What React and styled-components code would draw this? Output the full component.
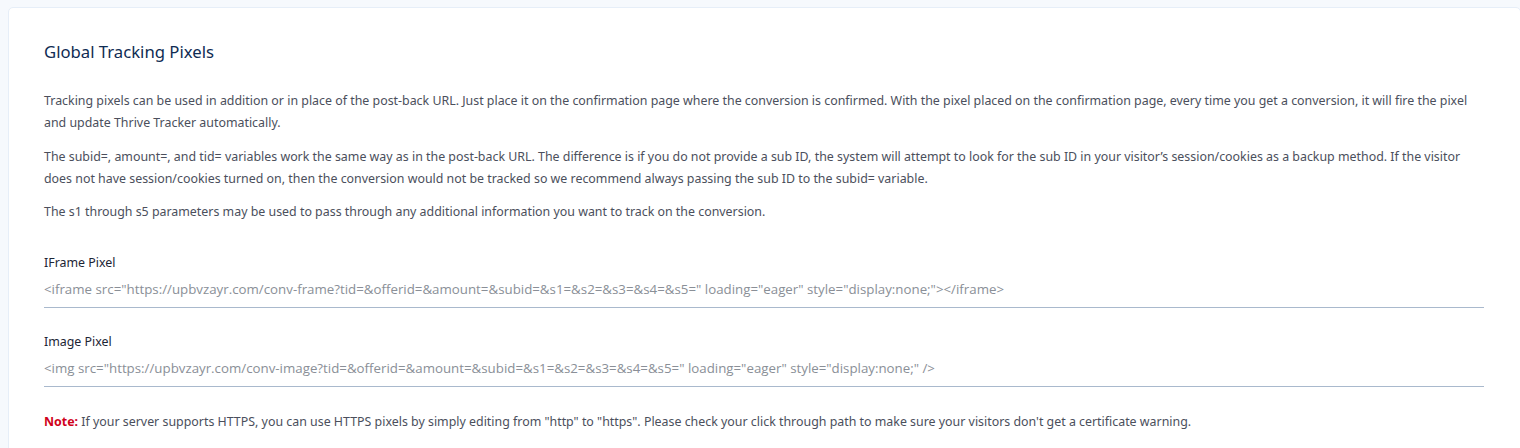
import React from "react";
import styled, { createGlobalStyle } from "styled-components";

const Global = createGlobalStyle`
  html, body { margin: 0; padding: 0; background: #f6f9fd; overflow: hidden; }
  body { font-family: "Noto Sans", "Liberation Sans", sans-serif; }
`;

const Page = styled.div`
  padding: 7px 0 0 8px;
  width: 1530px;
`;

const Card = styled.section`
  background: #ffffff;
  border: 1px solid #e6eef8;
  border-radius: 5px;
  padding: 32px 36px 20px 35px;
  width: 1440px;
`;

const Title = styled.h2`
  margin: 0 0 26px;
  font-size: 16.7px;
  font-weight: 400;
  color: #0f2c53;
  line-height: 24px;
`;

const Para = styled.p`
  margin: 0 0 ${(p) => p.$gap ?? 12}px;
  font-size: 12.4px;
  line-height: 22px;
  color: #4b4f5c;
`;

const Field = styled.div`
  margin-top: ${(p) => p.$top || 0}px;
  display: flex;
  flex-direction: column;
`;

const Label = styled.label`
  font-size: 12.4px;
  line-height: 20px;
  color: #1c2535;
  margin-bottom: 6px;
`;

const Input = styled.input`
  border: none;
  border-bottom: 1px solid #a9b9cd;
  outline: none;
  padding: 0 0 8px;
  font-family: "Open Sans", "Noto Sans", sans-serif;
  font-size: 13.3px;
  line-height: 20px;
  color: #8a8f97;
  background: transparent;
  width: 100%;
`;

const Note = styled.p`
  margin: 24px 0 0;
  font-size: 12.4px;
  line-height: 22px;
  color: #4b4f5c;
`;

const Strong = styled.strong`
  color: #d0021b;
  font-weight: 700;
`;

export default function App() {
  return (
    <>
      <Global />
      <Page>
        <Card>
          <Title>Global Tracking Pixels</Title>
          <Para>
            Tracking pixels can be used in addition or in place of the post-back URL. Just place it on the confirmation page where the conversion is confirmed. With the pixel placed on the confirmation page, every time you get a conversion, it will fire the pixel and update Thrive Tracker automatically.
          </Para>
          <Para $gap={11}>
            The subid=, amount=, and tid= variables work the same way as in the post-back URL. The difference is if you do not provide a sub ID, the system will attempt to look for the sub ID in your visitor’s session/cookies as a backup method. If the visitor does not have session/cookies turned on, then the conversion would not be tracked so we recommend always passing the sub ID to the subid= variable.
          </Para>
          <Para $gap={0}>
            The s1 through s5 parameters may be used to pass through any additional information you want to track on the conversion.
          </Para>
          <Field $top={30}>
            <Label>IFrame Pixel</Label>
            <Input
              readOnly
              value={'<iframe src="https://upbvzayr.com/conv-frame?tid=&offerid=&amount=&subid=&s1=&s2=&s3=&s4=&s5=" loading="eager" style="display:none;"></iframe>'}
            />
          </Field>
          <Field $top={24}>
            <Label>Image Pixel</Label>
            <Input
              readOnly
              value={'<img src="https://upbvzayr.com/conv-image?tid=&offerid=&amount=&subid=&s1=&s2=&s3=&s4=&s5=" loading="eager" style="display:none;" />'}
            />
          </Field>
          <Note>
            <Strong>Note:</Strong> If your server supports HTTPS, you can use HTTPS pixels by simply editing from "http" to "https". Please check your click through path to make sure your visitors don't get a certificate warning.
          </Note>
        </Card>
      </Page>
    </>
  );
}
